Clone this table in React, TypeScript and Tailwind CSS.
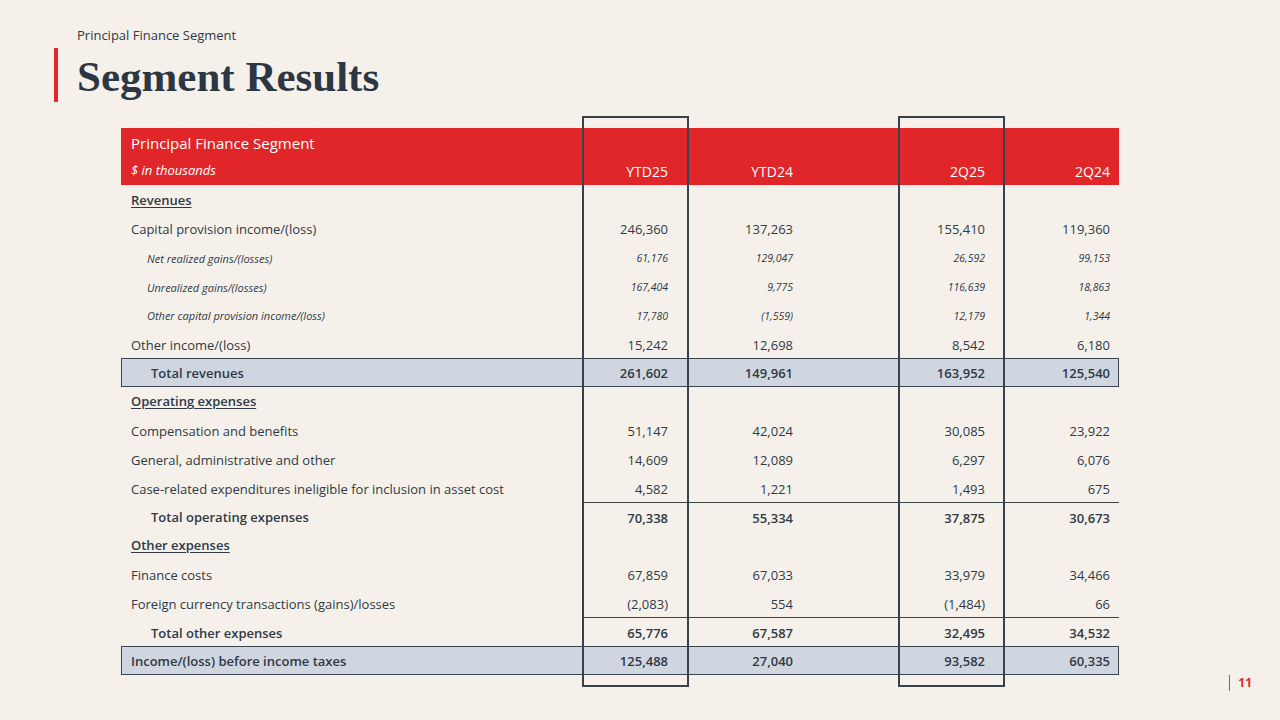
import * as React from "react";

type Row = {
  label: string;
  vals?: string[];
  kind: "section" | "normal" | "sub" | "total" | "boxed";
};

const rows: Row[] = [
  { label: "Revenues", kind: "section" },
  { label: "Capital provision income/(loss)", vals: ["246,360", "137,263", "155,410", "119,360"], kind: "normal" },
  { label: "Net realized gains/(losses)", vals: ["61,176", "129,047", "26,592", "99,153"], kind: "sub" },
  { label: "Unrealized gains/(losses)", vals: ["167,404", "9,775", "116,639", "18,863"], kind: "sub" },
  { label: "Other capital provision income/(loss)", vals: ["17,780", "(1,559)", "12,179", "1,344"], kind: "sub" },
  { label: "Other income/(loss)", vals: ["15,242", "12,698", "8,542", "6,180"], kind: "normal" },
  { label: "Total revenues", vals: ["261,602", "149,961", "163,952", "125,540"], kind: "boxed" },
  { label: "Operating expenses", kind: "section" },
  { label: "Compensation and benefits", vals: ["51,147", "42,024", "30,085", "23,922"], kind: "normal" },
  { label: "General, administrative and other", vals: ["14,609", "12,089", "6,297", "6,076"], kind: "normal" },
  { label: "Case-related expenditures ineligible for inclusion in asset cost", vals: ["4,582", "1,221", "1,493", "675"], kind: "normal" },
  { label: "Total operating expenses", vals: ["70,338", "55,334", "37,875", "30,673"], kind: "total" },
  { label: "Other expenses", kind: "section" },
  { label: "Finance costs", vals: ["67,859", "67,033", "33,979", "34,466"], kind: "normal" },
  { label: "Foreign currency transactions (gains)/losses", vals: ["(2,083)", "554", "(1,484)", "66"], kind: "normal" },
  { label: "Total other expenses", vals: ["65,776", "67,587", "32,495", "34,532"], kind: "total" },
  { label: "Income/(loss) before income taxes", vals: ["125,488", "27,040", "93,582", "60,335"], kind: "boxed" },
];

function Cells({ vals, cls, last = "w-[115px] pr-[9px]" }: { vals: string[]; cls: string; last?: string }) {
  return (
    <>
      <div className={`w-[105px] pr-[20px] text-right ${cls}`}>{vals[0]}</div>
      <div className={`w-[125px] pr-[20px] text-right ${cls}`}>{vals[1]}</div>
      <div className="w-[86px]" />
      <div className={`w-[105px] pr-[19px] text-right ${cls}`}>{vals[2]}</div>
      <div className={`${last} text-right ${cls}`}>{vals[3]}</div>
    </>
  );
}

function TableRow({ r }: { r: Row }) {
  if (r.kind === "section") {
    return (
      <div className="flex h-[28.8px] items-center">
        <div className="w-[462px] translate-y-[1px] pl-[10px] text-[13px] font-semibold underline underline-offset-2">{r.label}</div>
      </div>
    );
  }
  if (r.kind === "sub") {
    return (
      <div className="flex h-[28.8px] items-center">
        <div className="w-[462px] translate-y-[2px] pl-[26px] text-[11px] italic">{r.label}</div>
        <Cells vals={r.vals!} cls="translate-y-[2px] text-[10.5px] italic" />
      </div>
    );
  }
  if (r.kind === "boxed") {
    const indent = r.label === "Total revenues" ? "pl-[29px]" : "pl-[9px]";
    return (
      <div className="flex h-[28.8px] items-center border border-[#3b4550] bg-[#cfd6e0]">
        <div className={`w-[461px] translate-y-[2px] ${indent} text-[13px] font-semibold`}>{r.label}</div>
        <div className="flex">
          <Cells vals={r.vals!} cls="translate-y-[2px] text-[13px] font-semibold" last="w-[114px] pr-[8px]" />
        </div>
      </div>
    );
  }
  if (r.kind === "total") {
    return (
      <div className="flex h-[28.8px] items-center">
        <div className="w-[462px] translate-y-[2px] pl-[30px] text-[13px] font-semibold">{r.label}</div>
        <div className="flex h-full items-center border-t border-[#3b4550]">
          <Cells vals={r.vals!} cls="translate-y-[2px] text-[13px] font-semibold" />
        </div>
      </div>
    );
  }
  return (
    <div className="flex h-[28.8px] items-center">
      <div className="w-[462px] translate-y-[2px] pl-[10px] text-[13px]">{r.label}</div>
      <Cells vals={r.vals!} cls="translate-y-[2px] text-[13px]" />
    </div>
  );
}

export default function App() {
  return (
    <div className="relative h-[720px] w-[1280px] overflow-hidden bg-[#f5f1ea] text-[#2f3a46]" style={{ fontFamily: "'Open Sans', Lato, sans-serif" }}>
      <div className="pl-[54px] pt-[26px]">
        <div className="pl-[23px] text-[13px] leading-[18px]">Principal Finance Segment</div>
        <div className="mt-[4px] flex h-[54px] items-center border-l-[4px] border-[#e0262a] pl-[19px]">
          <h1 className="pt-[2px] text-[43px] font-bold leading-none text-[#2c3744]" style={{ fontFamily: "'Liberation Serif', 'DejaVu Serif', serif" }}>
            Segment Results
          </h1>
        </div>
      </div>

      <div className="relative ml-[121px] mt-[26px] w-[998px]">
        <div className="flex h-[57px] bg-[#e1262a] text-white">
          <div className="flex w-[462px] flex-col pl-[10px]">
            <div className="flex h-[29px] items-center pt-[2px] text-[15px]">Principal Finance Segment</div>
            <div className="flex h-[28px] items-center text-[13px] italic">$ in thousands</div>
          </div>
          <div className="flex items-end pb-[1px]">
            <div className="flex h-[26px] items-center">
              <Cells vals={["YTD25", "YTD24", "2Q25", "2Q24"]} cls="text-[14px]" />
            </div>
          </div>
        </div>
        {rows.map((r, i) => (
          <TableRow key={i} r={r} />
        ))}

        <div className="pointer-events-none absolute left-[461px] top-[-12px] bottom-[-12px] w-[107px] border-2 border-[#38424d]" />
        <div className="pointer-events-none absolute left-[777px] top-[-12px] bottom-[-12px] w-[107px] border-2 border-[#38424d]" />
      </div>

      <div className="absolute bottom-[28px] right-[28px] flex items-center gap-[8px]">
        <div className="h-[16px] w-[1px] bg-[#6b7078]" />
        <div className="text-[12px] font-bold text-[#e0262a]">11</div>
      </div>
    </div>
  );
}
